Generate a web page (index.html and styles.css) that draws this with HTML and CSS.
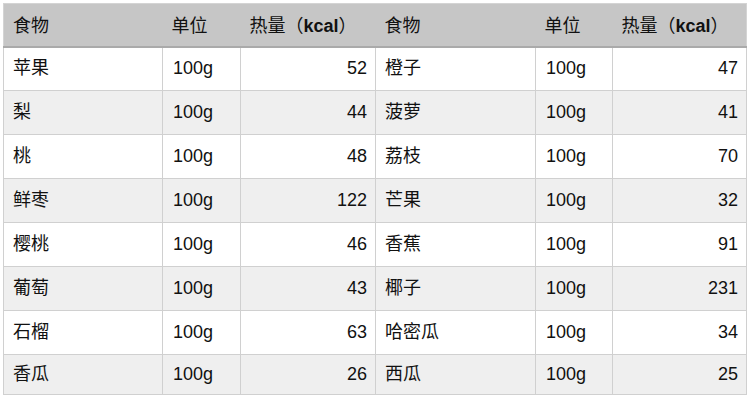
FILE: index.html
```html
<!DOCTYPE html>
<html lang="zh">
<head>
<meta charset="utf-8">
<link rel="stylesheet" href="styles.css">
</head>
<body>
<table class="cal">
  <colgroup>
    <col class="c-name"><col class="c-unit"><col class="c-kcal">
    <col class="c-name2"><col class="c-unit2"><col class="c-kcal2">
  </colgroup>
  <thead>
    <tr>
      <th class="name">食物</th><th>单位</th><th>热量<span class="paren">（</span><b>kcal</b><span class="paren">）</span></th>
      <th class="name">食物</th><th>单位</th><th>热量<span class="paren">（</span><b>kcal</b><span class="paren">）</span></th>
    </tr>
  </thead>
  <tbody>
    <tr><td class="name">苹果</td><td>100g</td><td class="num">52</td><td class="name">橙子</td><td>100g</td><td class="num">47</td></tr>
    <tr><td class="name">梨</td><td>100g</td><td class="num">44</td><td class="name">菠萝</td><td>100g</td><td class="num">41</td></tr>
    <tr><td class="name">桃</td><td>100g</td><td class="num">48</td><td class="name">荔枝</td><td>100g</td><td class="num">70</td></tr>
    <tr><td class="name">鲜枣</td><td>100g</td><td class="num">122</td><td class="name">芒果</td><td>100g</td><td class="num">32</td></tr>
    <tr><td class="name">樱桃</td><td>100g</td><td class="num">46</td><td class="name">香蕉</td><td>100g</td><td class="num">91</td></tr>
    <tr><td class="name">葡萄</td><td>100g</td><td class="num">43</td><td class="name">椰子</td><td>100g</td><td class="num">231</td></tr>
    <tr><td class="name">石榴</td><td>100g</td><td class="num">63</td><td class="name">哈密瓜</td><td>100g</td><td class="num">34</td></tr>
    <tr><td class="name">香瓜</td><td>100g</td><td class="num">26</td><td class="name">西瓜</td><td>100g</td><td class="num">25</td></tr>
  </tbody>
</table>
</body>
</html>
```
FILE: styles.css
```css
html, body {
  margin: 0;
  padding: 0;
  background: #ffffff;
}
body {
  padding: 3px 0 0 3px;
  font-family: "Liberation Sans", "Noto Sans CJK SC", sans-serif;
  font-size: 18px;
  color: #111111;
}
.cal {
  border-collapse: collapse;
  table-layout: fixed;
  width: 743px;
  border: 1px solid #d4d4d4;
}
.c-name { width: 159px; }
.c-unit { width: 78px; }
.c-kcal { width: 135px; }
.c-name2 { width: 160px; }
.c-unit2 { width: 77px; }
.c-kcal2 { width: 134px; }

.cal thead tr {
  height: 43px;
  background: #c6c6c6;
  border-bottom: 2px solid #aaaaaa;
}
.cal th {
  text-align: left;
  font-weight: normal;
  padding: 0 0 2px 9px;
  white-space: nowrap;
  vertical-align: middle;
}
.cal th b {
  font-weight: bold;
}
.cal th .paren {
  font-family: "Noto Sans CJK SC", sans-serif;
}
.cal tbody tr {
  height: 44px;
}
.cal tbody tr:last-child {
  height: 40px;
}
.cal tbody tr:nth-child(odd) { background: #ffffff; }
.cal tbody tr:nth-child(even) { background: #efefef; }
.cal td {
  border: 1px solid #d0d0d0;
  padding: 0 8px 0 10px;
  vertical-align: middle;
}
.cal td.name {
  padding-left: 9px;
  padding-bottom: 6px;
}
.cal td.num {
  text-align: right;
  padding-right: 8px;
}
```
